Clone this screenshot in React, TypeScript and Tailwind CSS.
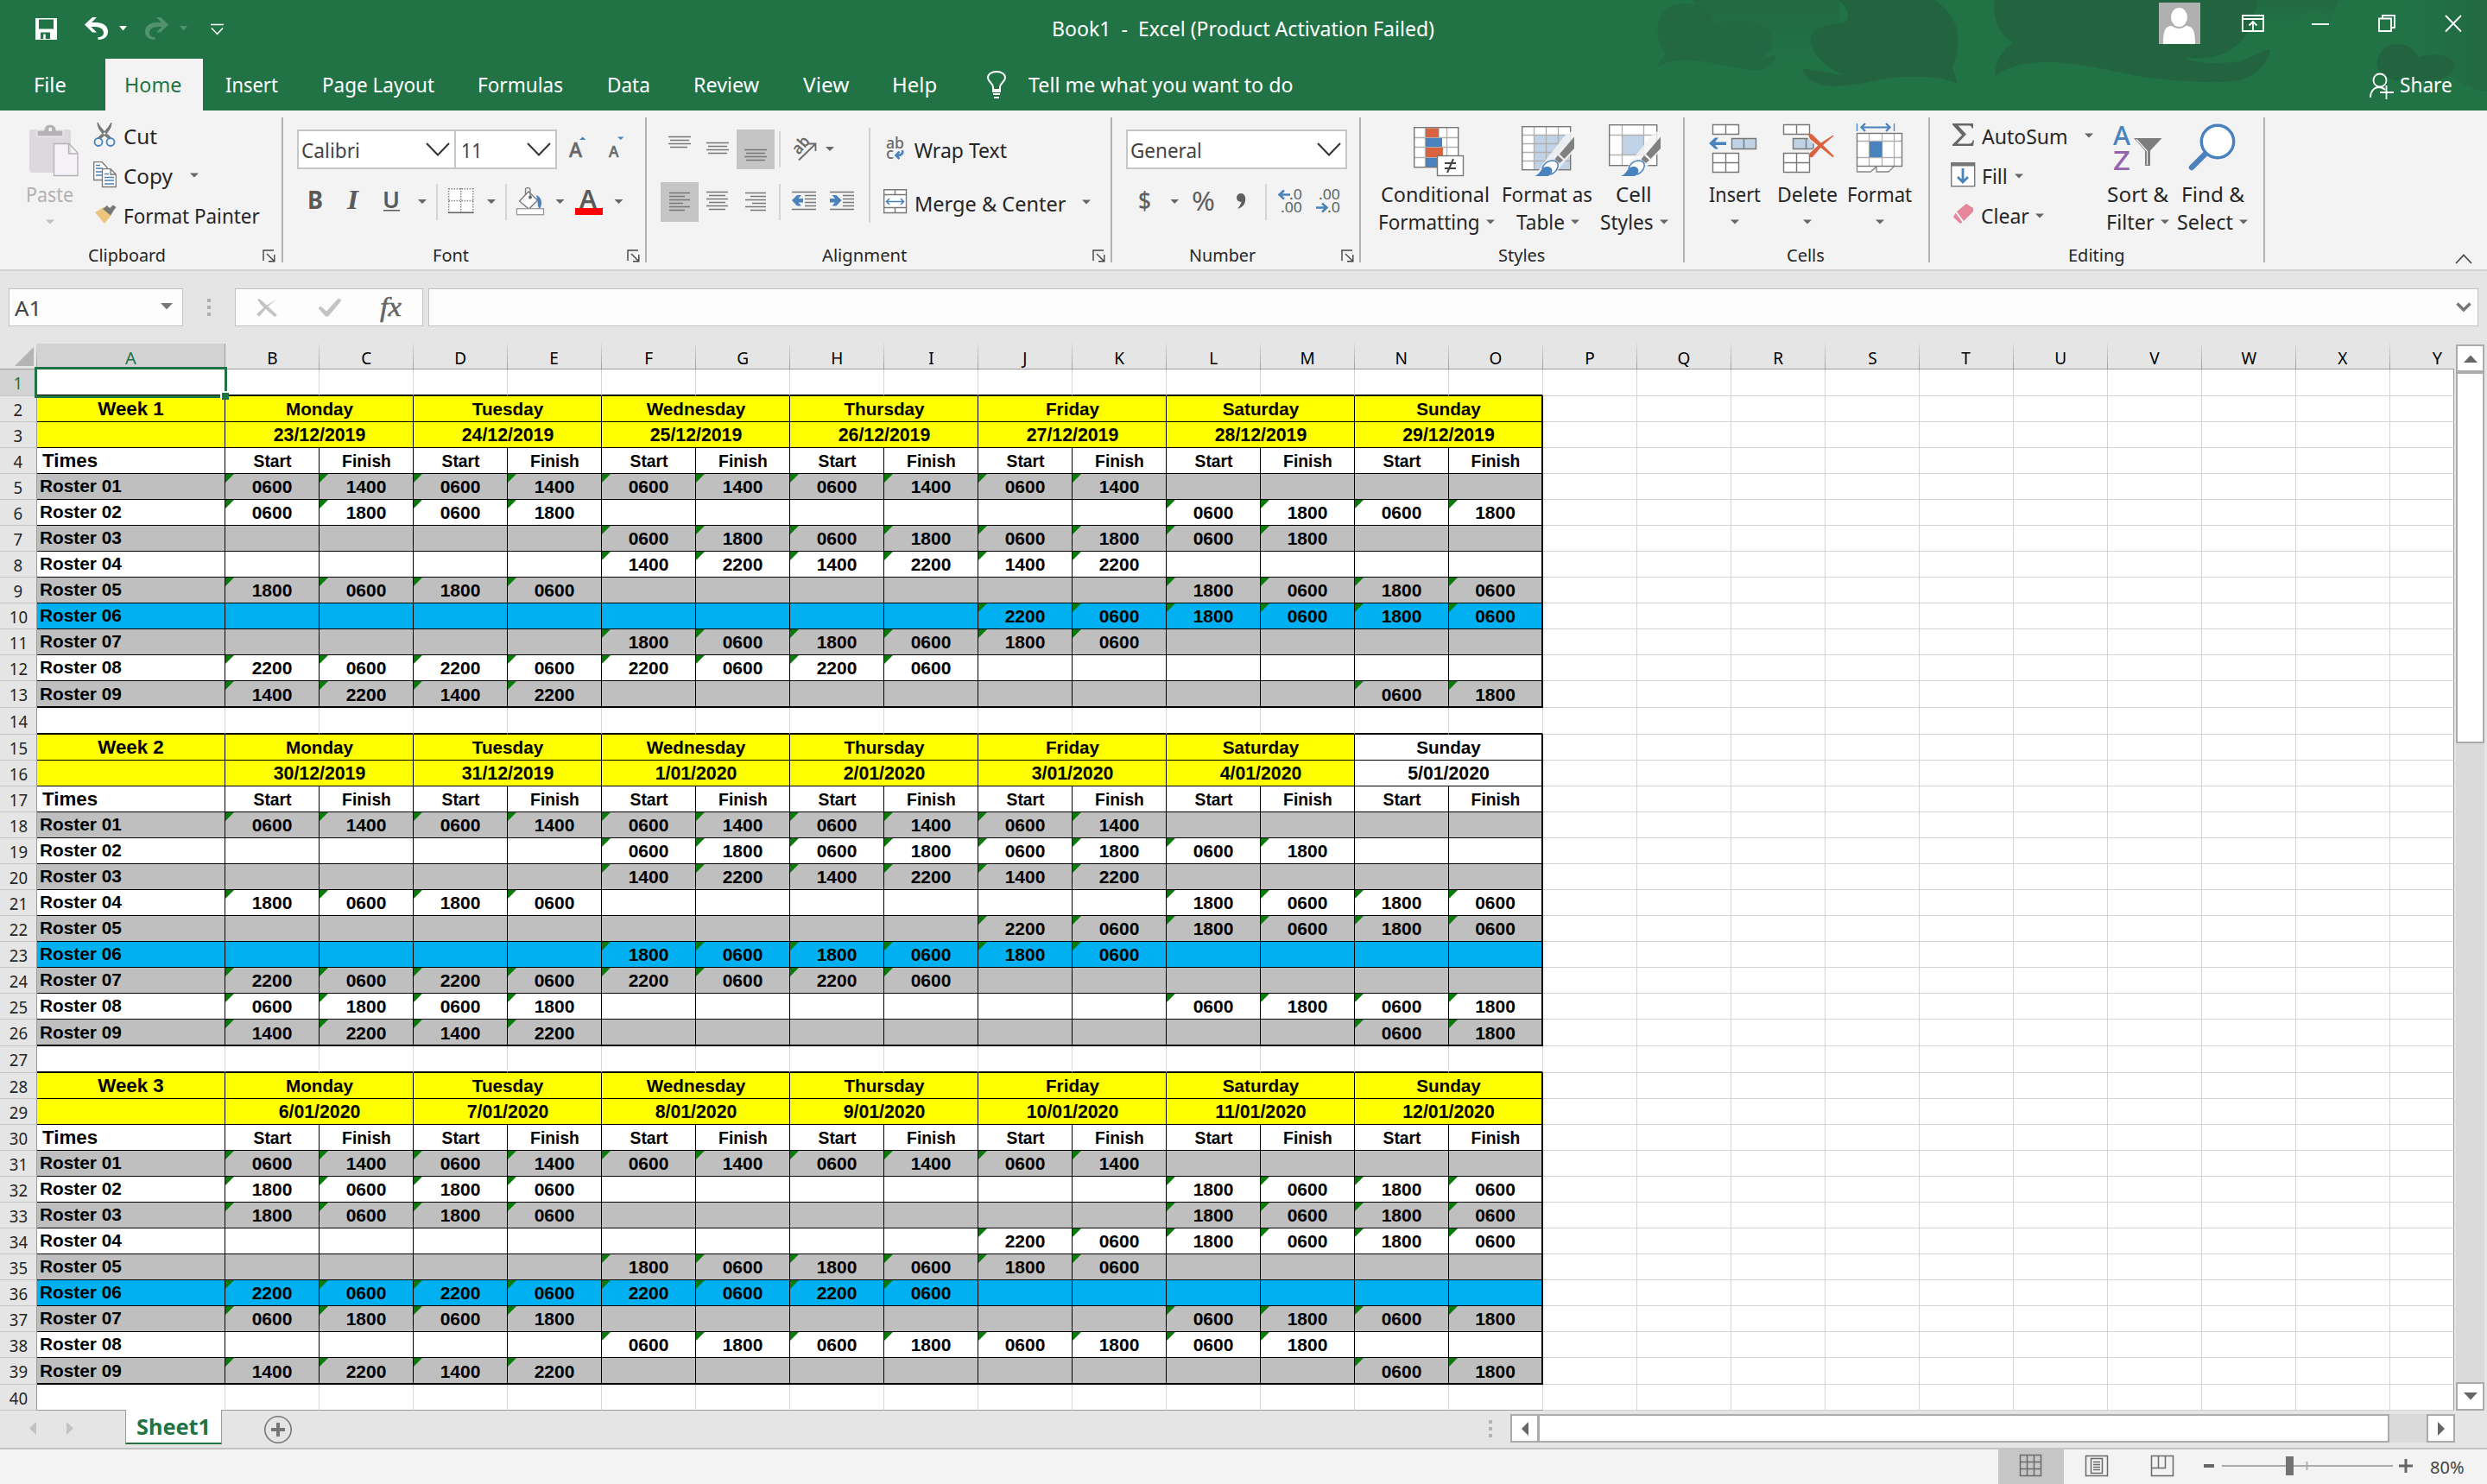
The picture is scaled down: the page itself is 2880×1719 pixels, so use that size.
import React, { useLayoutEffect, useRef } from "react";
import type { ReactNode } from "react";

/* ---------- primitives ---------- */

// One line of text condensed or widened to the width of its box.
function T({ c = "", children }: { c?: string; children: ReactNode }) {
  const box = useRef<HTMLSpanElement>(null);
  const ink = useRef<HTMLSpanElement>(null);
  useLayoutEffect(() => {
    if (box.current && ink.current) {
      ink.current.style.transform = `scaleX(${box.current.clientWidth / ink.current.offsetWidth})`;
    }
  }, []);
  return (
    <span ref={box} className={`block shrink-0 ${c}`}>
      <span ref={ink} className="inline-block origin-left whitespace-pre">
        {children}
      </span>
    </span>
  );
}

type IcProps = { x: number; y: number; w: number; h: number; c?: string; children: ReactNode };
function Ic({ x, y, w, h, c = "", children }: IcProps) {
  return (
    <svg width={w} height={h} viewBox={`${x} ${y} ${w} ${h}`} fill="none" className={`block shrink-0 ${c}`}>
      {children}
    </svg>
  );
}

function Arrow({ c = "text-[#666]" }: { c?: string }) {
  return (
    <svg width="10" height="6" viewBox="0 0 10 6" className={`block shrink-0 ${c}`}>
      <path d="M0 0.5H10L5 5.5Z" fill="currentColor" />
    </svg>
  );
}

const Sep = () => <div className="mt-2 h-[168px] w-[2px] shrink-0 bg-[#b1b1b1]" />;

const Launcher = ({ c }: { c: string }) => (
  <svg width="15" height="15" viewBox="0 0 15 15" fill="none" stroke="#444" strokeWidth="1.4" className={`shrink-0 ${c}`}>
    <path d="M13 1H1V13M5 5L13 13M13.8 6V13.8H7" />
  </svg>
);

function Group({ w, label, launcher, children }: { w: string; label: ReactNode; launcher?: ReactNode; children: ReactNode }) {
  return (
    <section className={`flex shrink-0 flex-col pt-[7px] ${w}`}>
      <div className="flex h-[138px]">{children}</div>
      <div className="mt-[8px] flex h-[30px] items-center text-[20px] leading-[30px]">
        {label}
        {launcher}
      </div>
    </section>
  );
}

function Combo({ w, text, tw }: { w: string; text: string; tw: string }) {
  return (
    <div className={`flex h-[46px] shrink-0 items-center border-2 border-[#c6c6c6] bg-white pl-[3px] pr-[5px] text-[#444] ${w}`}>
      <T c={`pt-[2px] ${tw}`}>{text}</T>
      <svg width="28" height="16" viewBox="0 0 28 16" className="ml-auto" fill="none" stroke="#333" strokeWidth="2">
        <path d="M1 1L14 14.5L27 1" />
      </svg>
    </div>
  );
}

function BigButton({ c, icon, top, bottom }: { c: string; icon: ReactNode; top: ReactNode; bottom?: ReactNode }) {
  return (
    <div className={`flex shrink-0 flex-col items-center ${c}`}>
      {icon}
      <div className="flex h-8 items-center">{top}</div>
      <div className="flex h-8 items-center gap-[7px]">
        {bottom}
        <Arrow />
      </div>
    </div>
  );
}

const Lines = ({ rows }: { rows: number[][] }) => (
  <path d={rows.map(([a, b, y]) => `M${a} ${y}H${b}`).join("")} stroke="#777" strokeWidth="1.5" />
);

/* ---------- title bar and tabs ---------- */

function Backdrop() {
  return (
    <svg className="absolute right-0 top-0" width="1000" height="128" viewBox="1880 0 1000 128">
      <defs>
        <linearGradient id="haze" x1="0" x2="0" y1="0" y2="1">
          <stop offset="0" stopColor="#236640" stopOpacity="0.75" />
          <stop offset="1" stopColor="#236640" stopOpacity="0" />
        </linearGradient>
        <linearGradient id="side" x1="0" x2="1" y1="0" y2="0">
          <stop offset="0" stopColor="#236640" stopOpacity="0" />
          <stop offset="1" stopColor="#236640" stopOpacity="0.75" />
        </linearGradient>
      </defs>
      <path d="M1960 0H2130V60C2060 90 1990 60 1960 0Z" fill="url(#haze)" />
      <path d="M2600 0H2708C2702 16 2700 26 2692 26C2690 10 2672 10 2668 24C2650 34 2620 30 2600 0Z" fill="url(#haze)" />
      <path d="M2785 0H2880V106C2850 104 2810 70 2797 50Z" fill="url(#side)" />
      <path d="M1918 79L1928 62C1912 38 1918 4 1951 4C1974 5 1984 18 1986 28C2010 20 2050 24 2052 42C2054 56 2046 64 2038 68L2057 64C2054 76 2044 82 2030 81C1998 79 1946 58 1918 79Z" fill="#236641" fillOpacity="0.8" />
      <path d="M2128 0H2240C2272 20 2272 52 2261 78L2267 97C2242 86 2222 89 2199 89C2174 91 2152 100 2122 100C2100 99 2090 90 2087 79L2134 87C2108 74 2096 58 2097 44C2099 30 2118 30 2136 26C2144 20 2140 8 2128 0Z" fill="#236440" />
      <path d="M2310 0C2306 22 2316 40 2331 50C2318 58 2310 72 2310 88C2326 76 2348 71 2377 72C2430 74 2462 90 2518 93C2562 96 2596 98 2612 84C2622 76 2628 68 2629 58C2626 55 2618 62 2594 71C2570 74 2544 74 2530 67C2580 72 2600 48 2608 26C2612 14 2613 6 2613 0Z" fill="#236440" />
      <path d="M2776 51C2792 51 2798 60 2800 66C2820 60 2842 64 2842 76C2842 90 2820 96 2790 95C2764 94 2750 84 2753 70C2756 58 2764 51 2776 51Z" fill="#236440" />
    </svg>
  );
}

function TitleBar() {
  return (
    <div className="relative flex h-[68px] shrink-0 items-start text-white">
      <Ic x={40} y={0} w={220} h={68} c="ml-[40px]">
        <path d="M41 21H66V46H41Z" fill="#fff" />
        <path d="M45 22.5H62V33.5H45ZM47 37.5H58V45H52.5V40H50.5V45H47Z" fill="#217346" />
        <path d="M50.5 39.5H52.5V45H50.5Z" fill="#fff" />
        <path d="M112 20H107L98 28.5L107 37.5H112L105.5 31H110C116 31 120 34 120 38C120 41 118 43 113.5 43V46C121 46 125 42 125 36.5C125 30 119 26 111 26H106Z" fill="#fff" />
        <path d="M138 30H147L142.5 35.5Z" fill="#fff" />
        <g opacity="0.22">
          <path d="M181 20H186L195 28.5L186 37.5H181L187.5 31H183C177 31 173 34 173 38C173 41 175 43 179.500 43V46C172 46 168 42 168 36.500C168 30 174 26 182 26H187Z" fill="#fff" />
          <path d="M208 30H217L212.500 35.500Z" fill="#fff" />
        </g>
        <path d="M244 28.500H259M245 32.500L251.500 39.500L258 32.500" stroke="#fff" strokeWidth="1.500" />
      </Ic>
      <T c="ml-[958px] w-[443px] text-[23px] leading-[66px]">{"Book1  -  Excel (Product Activation Failed)"}</T>
      <Ic x={2500} y={0} w={380} h={68} c="ml-auto">
        <rect x="2500" y="3" width="48" height="48" fill="#b0b0b0" />
        <ellipse cx="2523.500" cy="20" rx="9.500" ry="11" fill="#fff" />
        <path d="M2505 51C2505 36 2507 30 2515 30C2520 34 2527 34 2531 30C2540 30 2542 36 2542 51Z" fill="#fff" />
        <g stroke="#fff" strokeWidth="1.800">
          <path d="M2597 18H2621V36H2597ZM2597 22H2621M2609 35V26M2604.500 29.500L2609 25L2613.500 29.500" />
          <path d="M2677 28H2697" />
          <path d="M2755 21.500H2769V36H2755ZM2759 21V18H2773V32H2769" />
          <path d="M2832 18L2850 36.500M2850 18L2832 36.500" />
        </g>
      </Ic>
    </div>
  );
}

function Tabs() {
  return (
    <nav className="relative flex h-[60px] shrink-0 text-[23px] leading-[60px] text-white">
      <T c="ml-[39px] w-[38px]">File</T>
      <div className="ml-[45px] flex h-[60px] w-[113px] shrink-0 bg-[#f3f3f3] pl-[22px] text-[#217346]">
        <T c="w-[66px]">Home</T>
      </div>
      <T c="ml-[26px] w-[61px]">Insert</T>
      <T c="ml-[51px] w-[130px]">Page Layout</T>
      <T c="ml-[50px] w-[99px]">Formulas</T>
      <T c="ml-[51px] w-[50px]">Data</T>
      <T c="ml-[50px] w-[76px]">Review</T>
      <T c="ml-[51px] w-[53px]">View</T>
      <T c="ml-[50px] w-[52px]">Help</T>
      <Ic x={1142} y={68} w={24} h={60} c="ml-[58px]">
        <path d="M1149 106V101C1149 96 1143 95 1143 90C1143 86 1147 83 1153 83C1159 83 1163 86 1163 90C1163 95 1157 96 1157 101V106ZM1149 104H1157M1150 113H1156M1149 109H1157" stroke="#fff" strokeWidth="2" />
      </Ic>
      <T c="ml-[24px] w-[307px]">Tell me what you want to do</T>
      <Ic x={2743} y={68} w={31} h={60} c="ml-auto">
        <circle cx="2756" cy="93" r="7.500" stroke="#fff" strokeWidth="1.800" />
        <path d="M2745 113C2745 106 2749 101 2755 101C2758 101 2760 102 2762 104M2763.500 99V115M2756 107H2772" stroke="#fff" strokeWidth="1.800" />
      </Ic>
      <T c="ml-[5px] mr-[40px] w-[61px]">Share</T>
    </nav>
  );
}

/* ---------- ribbon ---------- */

function Clipboard() {
  return (
    <Group w="w-[326px]" label={<T c="ml-[102px] w-[90px]">Clipboard</T>} launcher={<Launcher c="ml-[112px]" />}>
      <div className="ml-[24px] flex w-[68px] shrink-0 flex-col items-center text-[#b3b0b3]">
        <Ic x={24} y={135} w={68} h={74}>
          <rect x="34" y="150" width="48" height="50" rx="3" fill="#dcd8dc" />
          <path d="M43 158V151H51C51 142 65 142 65 151H73V158Z" fill="#b5b2b5" stroke="#f3f3f3" />
          <rect x="56.500" y="148" width="3.500" height="4" fill="#f3f3f3" />
          <path d="M62.500 166.500H80L90 177V203.500H62.500ZM79.500 167V178H90" fill="#f5f1f7" stroke="#b5b2b5" strokeWidth="1.300" />
        </Ic>
        <div className="flex h-8 items-center"><T c="mr-[2px] w-[55px]">Paste</T></div>
        <div className="flex h-8 items-center"><Arrow c="text-[#c0bec0]" /></div>
      </div>
      <div className="ml-[16px] flex flex-col">
        <div className="flex h-[46px] items-center">
          <Ic x={108} y={135} w={27} h={46}>
            <path d="M113 142C113 150 119 155 126 161L128 159C122 154 117 149 113 142ZM129 142C129 150 123 155 116 161L114 159C120 154 125 149 129 142Z" fill="#777" stroke="#777" />
            <circle cx="114" cy="164.500" r="4.500" stroke="#4a82bd" strokeWidth="1.800" />
            <circle cx="128" cy="164.500" r="4.500" stroke="#4a82bd" strokeWidth="1.800" />
          </Ic>
          <T c="ml-[8px] w-[39px]">Cut</T>
        </div>
        <div className="flex h-[46px] items-center">
          <Ic x={108} y={181} w={27} h={46}>
            <path d="M108.700 187.700H118L124 194V208.500H108.700Z" fill="#fff" stroke="#777" strokeWidth="1.300" />
            <path d="M111 191.500H116M111 195H119M111 199H118M111 203H118" stroke="#4a82bd" strokeWidth="1.300" />
            <path d="M118.500 195.700H128L134.300 202V216.500H118.500ZM128 196V202H134" fill="#fff" stroke="#777" strokeWidth="1.300" />
            <path d="M121 201.500H126M121 205.500H132M121 209H132M121 213H132" stroke="#4a82bd" strokeWidth="1.300" />
          </Ic>
          <T c="ml-[8px] w-[57px] -mt-px">Copy</T>
          <span className="ml-[20px] -mt-[3px]"><Arrow /></span>
        </div>
        <div className="flex h-[46px] items-center">
          <Ic x={108} y={227} w={27} h={46}>
            <path d="M110 246L120 240L129 249L121 259Z" fill="#ecc57c" />
            <path d="M119 242L124 238L131 245L128 249.500ZM126 242L131 237.500L134.500 240L130 246Z" fill="#777" />
          </Ic>
          <T c="ml-[8px] w-[158px]">Format Painter</T>
        </div>
      </div>
    </Group>
  );
}

function FontGroup() {
  return (
    <Group w="w-[419px]" label={<T c="ml-[173px] w-[42px]">Font</T>} launcher={<Launcher c="ml-[183px]" />}>
      <div className="ml-[16px] flex flex-col">
        <div className="flex h-[75px] items-center">
          <Combo w="w-[184px]" text="Calibri" tw="w-[68px]" />
          <div className="-ml-[2px]"><Combo w="w-[119px]" text="11" tw="ml-[3px] w-[24px]" /></div>
          <Ic x={645} y={135} w={85} h={75}>
            <g fill="#666" fontFamily="Noto Sans" fontWeight="500">
              <text x="659" y="182" fontSize="23" stroke="#666" strokeWidth="0.500">A</text>
              <text x="705" y="182" fontSize="17.500" stroke="#666" strokeWidth="0.500">A</text>
            </g>
            <path d="M671 162H678.500L674.800 158.500ZM715 158.500H722.500L718.800 162Z" fill="#4a82bd" />
          </Ic>
        </div>
        <Ic x={344} y={210} w={390} h={48}>
          <g fill="#5a5a5a">
            <text x="356" y="241.500" fontFamily="Noto Sans" fontWeight="700" fontSize="28.500" textLength="18" lengthAdjust="spacingAndGlyphs">B</text>
            <text x="402" y="241.500" fontFamily="Liberation Serif" fontStyle="italic" fontWeight="700" fontSize="31" textLength="13" lengthAdjust="spacingAndGlyphs">I</text>
            <text x="443" y="240.500" fontFamily="Noto Sans" fontWeight="600" fontSize="27" textLength="20" lengthAdjust="spacingAndGlyphs">U</text>
            <rect x="444" y="243" width="19" height="1.500" />
            <text x="671" y="240.500" fontFamily="Noto Sans" fontWeight="600" fontSize="28.500" textLength="20" lengthAdjust="spacingAndGlyphs">A</text>
          </g>
          <path d="M484 231H494L489 236ZM564 231H574L569 236ZM643.500 231H653.500L648.500 236ZM711.500 231H721.500L716.500 236Z" fill="#666" />
          <path d="M506 213V255M586 213V255" stroke="#d0d0d0" strokeWidth="1.700" />
          <path d="M519.500 218.700H548V246H519.500Z" fill="#fff" />
          <path d="M519.500 218.700H548M519.500 232.500H548M519.700 218V246M533.700 218V246M547.700 218V246" stroke="#888" strokeWidth="1.500" strokeDasharray="1.500 1.500" />
          <path d="M519 246.300H548.500" stroke="#666" strokeWidth="1.600" />
          <path d="M621 226C627 228 629 236 625 242C622 240 623 232 621 226Z" fill="#4a82bd" />
          <path d="M601.500 233L612 222L622.500 232L612.500 242Z" fill="#fff" stroke="#777" strokeWidth="1.300" />
          <path d="M608.500 226V219.500C608.500 217 614 217 614 219.500V229" stroke="#777" strokeWidth="1.300" />
          <circle cx="614" cy="228.500" r="2" fill="#666" />
          <rect x="598.500" y="241.700" width="31" height="7" fill="#fff" stroke="#999" strokeWidth="1.300" />
          <rect x="666" y="241" width="32" height="8" fill="#f00" />
        </Ic>
      </div>
    </Group>
  );
}

function Alignment() {
  return (
    <Group w="w-[537px]" label={<T c="ml-[203px] w-[98px]">Alignment</T>} launcher={<Launcher c="ml-[215px]" />}>
      <div className="ml-[14px] flex w-[243px] shrink-0 flex-col">
        <Ic x={763} y={135} w={230} h={75}>
          <rect x="853" y="150" width="44" height="46" fill="#c5c5c5" />
          <Lines rows={[[774, 800, 158.500], [776, 798, 162.500], [774, 800, 166.500], [776, 796, 170.500]]} />
          <Lines rows={[[818, 844, 165.500], [820, 842, 169.500], [818, 844, 173.500], [820, 842, 177.500]]} />
          <Lines rows={[[862, 888, 173.500], [864, 886, 177.500], [862, 888, 181.500], [864, 886, 185.500]]} />
          <path d="M903 152V194" stroke="#d0d0d0" strokeWidth="1.700" />
          <text transform="translate(925 180) rotate(-49)" fontFamily="Noto Sans" fontWeight="600" fontSize="18.500" fill="#6a6a6a" textLength="21" lengthAdjust="spacingAndGlyphs">ab</text>
          <path d="M925 185.500L944 167M936 166.500H944.500V175" stroke="#6a6a6a" strokeWidth="1.800" />
          <path d="M956 170H966L961 175Z" fill="#666" />
        </Ic>
        <Ic x={763} y={210} w={230} h={48}>
          <rect x="765" y="211" width="44" height="46" fill="#c5c5c5" />
          <Lines rows={[[775, 799, 223.500], [775, 793, 227.500], [775, 799, 231.500], [775, 791, 235.500], [775, 799, 239.500], [775, 793, 243.500]]} />
          <Lines rows={[[818, 843, 222.500], [821, 840, 226.500], [818, 843, 230.500], [821, 840, 234.500], [818, 843, 238.500], [821, 840, 242.500]]} />
          <Lines rows={[[863, 887, 223.500], [869, 887, 227.500], [863, 887, 231.500], [871, 887, 235.500], [863, 887, 239.500], [869, 887, 243.500]]} />
          <path d="M903 213V255" stroke="#d0d0d0" strokeWidth="1.700" />
          <Lines rows={[[917, 945, 222.500], [932, 945, 226.500], [932, 945, 230.500], [932, 945, 234.500], [932, 945, 238.500], [917, 945, 242.500]]} />
          <Lines rows={[[961, 989, 222.500], [976, 989, 226.500], [976, 989, 230.500], [976, 989, 234.500], [976, 989, 238.500], [961, 989, 242.500]]} />
          <path d="M917 232L923 226H928L924.500 230H930V234.500H924.500L928 238.500H923ZM974.500 232L968.500 226H963.500L967 230H961V234.500H967L963.500 238.500H968.500Z" fill="#4a82bd" />
        </Ic>
      </div>
      <div className="mt-[13px] h-[110px] w-[1.700px] shrink-0 bg-[#d0d0d0]" />
      <div className="ml-[15px] flex flex-col">
        <div className="flex h-[75px] items-center">
          <Ic x={1023} y={135} w={28} h={75}>
            <g fontFamily="Noto Sans" fontSize="18" fontWeight="500" fill="#6a6a6a">
              <text x="1026" y="171.500" textLength="21" lengthAdjust="spacingAndGlyphs">ab</text>
              <text x="1026" y="184" textLength="9" lengthAdjust="spacingAndGlyphs">c</text>
            </g>
            <path d="M1045 174C1046 178 1044 180 1039 180M1041.500 175.500L1037.500 180L1041.500 184" stroke="#4a82bd" strokeWidth="2.600" />
          </Ic>
          <T c="ml-[8px] w-[107px] pt-[2px]">Wrap Text</T>
        </div>
        <div className="flex h-[48px] items-center">
          <Ic x={1023} y={210} w={28} h={48}>
            <path d="M1023.700 219.700H1049.500V246.500H1023.700ZM1023.700 225.500H1049.500M1023.700 240.500H1049.500M1036.500 219.700V225.500M1036.500 240.500V246.500" fill="#fff" stroke="#777" strokeWidth="1.400" />
            <path d="M1027 233.500H1046M1030 230L1026.500 233.500L1030 237M1043 230L1046.500 233.500L1043 237" stroke="#4a82bd" strokeWidth="1.600" />
          </Ic>
          <T c="ml-[8px] w-[176px] pt-[3px]">{"Merge & Center"}</T>
          <span className="ml-[18px]"><Arrow /></span>
        </div>
      </div>
    </Group>
  );
}

function NumberGroup() {
  return (
    <Group w="w-[286px]" label={<T c="ml-[89px] w-[77px]">Number</T>} launcher={<Launcher c="ml-[99px]" />}>
      <div className="ml-[16px] flex flex-col">
        <div className="flex h-[75px] items-center">
          <Combo w="w-[256px]" text="General" tw="w-[83px]" />
        </div>
        <Ic x={1304} y={210} w={256} h={48}>
          <g fill="#5f5f5f" fontFamily="Noto Sans">
            <text x="1318" y="242.500" fontSize="28" fontWeight="500" textLength="15" lengthAdjust="spacingAndGlyphs">$</text>
            <text x="1380" y="244" fontSize="30" textLength="27" lengthAdjust="spacingAndGlyphs">%</text>
            <g fontSize="17">
              <text x="1493" y="231" textLength="15" lengthAdjust="spacingAndGlyphs">.0</text>
              <text x="1483" y="246" textLength="25" lengthAdjust="spacingAndGlyphs">.00</text>
              <text x="1527" y="231" textLength="25" lengthAdjust="spacingAndGlyphs">.00</text>
              <text x="1537" y="246" textLength="15" lengthAdjust="spacingAndGlyphs">.0</text>
            </g>
          </g>
          <circle cx="1437" cy="229" r="5" fill="#5f5f5f" />
          <path d="M1442 228C1443 235 1440 240 1433 242C1436 238 1438 235 1438 231Z" fill="#5f5f5f" />
          <path d="M1355.500 231H1365L1360.200 236Z" fill="#666" />
          <path d="M1466 213V255" stroke="#d0d0d0" strokeWidth="1.700" />
          <path d="M1494 225.500H1482M1487 220.500L1481.500 225.500L1487 230.500M1524 240.500H1536M1531 235.500L1536.500 240.500L1531 245.500" stroke="#4a82bd" strokeWidth="2.600" />
        </Ic>
      </div>
    </Group>
  );
}

const Brush = ({ x }: { x: number }) => (
  <g transform={`translate(${x} 0)`}>
    <path d="M-1 206L14 184L36 156L46 150V174L20 206Z" fill="#f3f3f3" fillOpacity="0.85" />
    <path d="M46 158.500V172L34.500 184L29 178.500Z" fill="#808080" />
    <path d="M27 180L33 185.500L29 189L23.500 184.500Z" fill="#808080" />
    <path d="M9 195C12 186 22 184 26 188C29 192 26 199 19 202Z" fill="#fff" stroke="#4a82bd" strokeWidth="1.500" />
    <path d="M0 204C7 202 8 192 15 193C21 193 23 200 16 204Z" fill="#4a82bd" />
  </g>
);

function Styles() {
  return (
    <Group w="w-[373px]" label={<T c="ml-[159px] w-[54px]">Styles</T>}>
      <BigButton
        c="ml-[18px] w-[138px]"
        top={<T c="mr-[2px] w-[126px]">Conditional</T>}
        bottom={<T c="w-[118px]">Formatting</T>}
        icon={
          <Ic x={1594} y={135} w={138} h={74}>
            <rect x="1637.700" y="147.700" width="51" height="46" fill="#fff" />
            <path d="M1638 159.500H1689M1638 170.500H1689M1638 182.500H1689M1650.500 148V193M1666 148V193M1675.500 148V193" stroke="#b0b0b0" strokeWidth="1.300" />
            <path d="M1651 148.500H1666V159H1651ZM1651 171H1671V182H1651Z" fill="#d9623f" />
            <path d="M1651 160H1670V170H1651ZM1651 183H1666V193H1651Z" fill="#4a82bd" />
            <rect x="1637.700" y="147.700" width="51" height="46" stroke="#777" strokeWidth="1.400" />
            <rect x="1664.500" y="180.500" width="30" height="23" fill="#fff" stroke="#777" strokeWidth="1.400" />
            <path d="M1673 189H1686M1673 195H1686M1683 184L1676 200" stroke="#444" strokeWidth="2" />
          </Ic>
        }
      />
      <BigButton
        c="ml-[6px] w-[108px]"
        top={<T c="mr-[2px] w-[105px]">Format as</T>}
        bottom={<T c="w-[56px]">Table</T>}
        icon={
          <Ic x={1738} y={135} w={108} h={74}>
            <rect x="1762.700" y="146.700" width="56" height="50" fill="#fff" />
            <rect x="1776.500" y="156.500" width="42" height="40" fill="#c0d2e5" />
            <path d="M1763 156.500H1819M1763 166.500H1819M1763 176.500H1819M1763 186.500H1819M1776.500 147V197M1790.500 147V197M1804.500 147V197" stroke="#b0b0b0" strokeWidth="1.300" />
            <rect x="1762.700" y="146.700" width="56" height="50" stroke="#777" strokeWidth="1.400" />
            <Brush x={1777} />
          </Ic>
        }
      />
      <BigButton
        c="ml-[4px] w-[84px]"
        top={<T c="mr-[2px] w-[41px]">Cell</T>}
        bottom={<T c="w-[62px]">Styles</T>}
        icon={
          <Ic x={1850} y={135} w={84} h={74}>
            <rect x="1863.700" y="144.700" width="55" height="47" fill="#fff" />
            <rect x="1878.500" y="156.500" width="25" height="23" fill="#c0d2e5" />
            <path d="M1864 156.500H1919M1864 179.500H1919M1878.500 145V191M1903.500 145V191" stroke="#b0b0b0" strokeWidth="1.300" />
            <rect x="1863.700" y="144.700" width="55" height="47" stroke="#777" strokeWidth="1.400" />
            <Brush x={1877} />
          </Ic>
        }
      />
    </Group>
  );
}

function Cells() {
  return (
    <Group w="w-[282px]" label={<T c="ml-[118px] w-[44px]">Cells</T>}>
      <BigButton
        c="ml-[25px] w-[66px]"
        top={<T c="w-[60px]">Insert</T>}
        icon={
          <Ic x={1976} y={135} w={66} h={74}>
            <g stroke="#777" strokeWidth="1.400">
              <path d="M1983.500 144.500H2013.500V155.500H1983.500ZM1998.500 144.500V155.500M1983.500 177.500H2013.500V199.500H1983.500ZM1998.500 177.500V199.500M1983.500 188.500H2013.500" fill="#fff" />
              <path d="M2005.500 160.500H2033.500V172.500H2005.500ZM2019.500 160.500V172.500" fill="#c0d2e5" />
            </g>
            <path d="M1979 166L1986 159.500H1990L1986 164.500H1999V168H1986L1990 172.500H1986Z" fill="#4a82bd" />
          </Ic>
        }
      />
      <BigButton
        c="ml-[14px] w-[74px]"
        top={<T c="w-[70px]">Delete</T>}
        icon={
          <Ic x={2056} y={135} w={74} h={74}>
            <g stroke="#777" strokeWidth="1.400">
              <path d="M2065.500 144.500H2095.500V155.500H2065.500ZM2080.500 144.500V155.500M2065.500 177.500H2095.500V199.500H2065.500ZM2080.500 177.500V199.500M2065.500 188.500H2095.500" fill="#fff" />
              <path d="M2076.500 160.500H2100V172.500H2076.500ZM2091.500 160.500V172.500" fill="#c0d2e5" />
            </g>
            <path d="M2096 157L2122 181M2122 159L2097 180" stroke="#f3f3f3" strokeWidth="8" />
            <path d="M2094 156C2096 154 2098 155 2100 157L2124 181L2122 182L2096 161ZM2124 157L2110 169L2099 182C2096 183 2094 181 2095 178L2108 166L2122 157Z" fill="#d9623f" />
          </Ic>
        }
      />
      <BigButton
        c="ml-[8px] w-[78px]"
        top={<T c="mr-[1px] w-[75px]">Format</T>}
        icon={
          <Ic x={2138} y={135} w={78} h={74}>
            <path d="M2150.500 143V152M2193.500 143V152" stroke="#4a82bd" strokeWidth="1.300" />
            <path d="M2156 147.500H2188M2160 143L2155.500 147.500L2160 152M2184 143L2188.500 147.500L2184 152" stroke="#4a82bd" strokeWidth="2.200" />
            <path d="M2150.500 193V199H2166L2173 193V199H2187L2194 192" fill="#fff" stroke="#888" strokeWidth="1.300" />
            <rect x="2150.500" y="154.500" width="52" height="38" fill="#fff" />
            <path d="M2151 163.500H2202M2151 182.500H2202M2164.500 155V192M2179.500 155V192M2193.500 155V192" stroke="#b0b0b0" strokeWidth="1.300" />
            <rect x="2165" y="164" width="14.500" height="18" fill="#4a82bd" />
            <rect x="2150.500" y="154.500" width="52" height="38" stroke="#777" strokeWidth="1.400" />
          </Ic>
        }
      />
    </Group>
  );
}

function Editing() {
  return (
    <Group w="w-[386px]" label={<T c="ml-[160px] w-[66px]">Editing</T>}>
      <div className="ml-[24px] flex w-[179px] shrink-0 flex-col">
        <div className="flex h-[46px] items-center">
          <Ic x={2259} y={135} w={29} h={46}>
            <path d="M2261 143H2285V148.500H2283.500C2283 146 2282 145.500 2279 145.500H2267.500L2277 155.500L2266.500 166.500H2280C2283 166.500 2284 165 2284.500 162.500H2286L2285 169H2261V167.500L2272 156.500L2261 144.500Z" fill="#666" />
          </Ic>
          <T c="ml-[7px] w-[99px]">AutoSum</T>
          <span className="ml-[20px] -mt-[3px]"><Arrow /></span>
        </div>
        <div className="flex h-[46px] items-center">
          <Ic x={2259} y={181} w={29} h={46}>
            <rect x="2259.700" y="188.700" width="27" height="27" fill="#fff" stroke="#777" strokeWidth="1.400" />
            <rect x="2259" y="188" width="28" height="4.500" fill="#777" />
            <path d="M2273 195V210M2267 205L2273 211L2279 205" stroke="#4a82bd" strokeWidth="2.800" />
          </Ic>
          <T c="ml-[7px] w-[30px]">Fill</T>
          <span className="ml-[8px]"><Arrow /></span>
        </div>
        <div className="flex h-[46px] items-center">
          <Ic x={2259} y={227} w={29} h={46}>
            <path d="M2266 245L2277 236L2285 241V245L2274 256ZM2264.500 246.500L2272.500 257.500L2270 259L2262 251.500Z" fill="#e5869b" />
          </Ic>
          <T c="ml-[6px] w-[56px]">Clear</T>
          <span className="ml-[7px]"><Arrow /></span>
        </div>
      </div>
      <BigButton
        c="w-[74px]"
        top={<T c="w-[71px]">{"Sort &"}</T>}
        bottom={<T c="w-[56px]">Filter</T>}
        icon={
          <Ic x={2438} y={135} w={74} h={74}>
            <g fontFamily="Noto Sans" fontSize="30" fontWeight="500">
              <text x="2447" y="168" fill="#4a82bd" textLength="20" lengthAdjust="spacingAndGlyphs">A</text>
              <text x="2447" y="197" fill="#9464b0" textLength="20" lengthAdjust="spacingAndGlyphs">Z</text>
            </g>
            <path d="M2471 160H2503.500L2490 174.500V192H2484V174.500Z" fill="#7d7d7d" />
            <path d="M2474 161.500L2486.500 175V191" stroke="#f3f3f3" strokeWidth="1.200" />
          </Ic>
        }
      />
      <BigButton
        c="ml-[7px] w-[86px]"
        top={<T c="w-[73px]">{"Find &"}</T>}
        bottom={<T c="w-[65px]">Select</T>}
        icon={
          <Ic x={2519} y={135} w={86} h={74}>
            <path d="M2553 179L2538 194" stroke="#4a82bd" strokeWidth="6.500" strokeLinecap="round" />
            <circle cx="2568" cy="164" r="18.700" fill="#fff" stroke="#4a82bd" strokeWidth="3.400" />
          </Ic>
        }
      />
    </Group>
  );
}

function Ribbon() {
  return (
    <div className="flex h-[186px] shrink-0 border-b-2 border-[#d2d2d2] bg-[#f3f3f3] text-[23px] leading-[32px] text-[#262626]">
      <div className="flex">
        <Clipboard />
        <Sep />
        <FontGroup />
        <Sep />
        <Alignment />
        <Sep />
        <NumberGroup />
        <Sep />
        <Styles />
        <Sep />
        <Cells />
        <Sep />
        <Editing />
        <Sep />
      </div>
      <svg width="20" height="12" viewBox="0 0 20 12" className="ml-auto mr-[17px] mt-[166px]" fill="none" stroke="#444" strokeWidth="1.700">
        <path d="M1 11L10 1.500L19 11" />
      </svg>
    </div>
  );
}

/* ---------- formula bar ---------- */

function FormulaBar() {
  return (
    <div className="flex h-[84px] shrink-0 pl-[10px] pr-[10px] pt-[20px]">
      <div className="flex h-[44px] w-[202px] items-center justify-between border border-[#c3c3c3] bg-[#fdfdfd] pl-[6px] pr-[11px] text-[24px] text-[#444]">
        <T c="w-[31px] pt-[1px]">A1</T>
        <svg width="14" height="8" viewBox="0 0 14 8" className="-mt-[3px]"><path d="M0 0H14L7 7.500Z" fill="#777" /></svg>
      </div>
      <div className="ml-[28px] mt-[12px] flex w-[4px] flex-col gap-[4px]">
        <i className="block h-[4px] bg-[#b0b0b0]" />
        <i className="block h-[4px] bg-[#b0b0b0]" />
        <i className="block h-[4px] bg-[#b0b0b0]" />
      </div>
      <div className="ml-[28px] flex h-[44px] w-[218px] border border-[#c3c3c3] bg-[#fdfdfd]">
        <Ic x={273} y={335} w={216} h={42}>
          <path d="M298 347C300 345 302 347 304 349L321 365L318 367L303 354ZM320 347L309 356L301 366C299 367 297 365 298 363L308 354Z" fill="#c4c4c4" />
          <path d="M369 357L371 355L378 361L392 346L395 348L380 366H377Z" fill="#c4c4c4" stroke="#c4c4c4" />
          <text x="440" y="366" fontFamily="Liberation Serif" fontStyle="italic" fontSize="31" fill="#666" stroke="#666" strokeWidth="0.500" textLength="25" lengthAdjust="spacingAndGlyphs">fx</text>
        </Ic>
      </div>
      <div className="ml-[6px] flex h-[44px] grow items-center justify-end border border-[#c3c3c3] bg-[#fdfdfd] pr-[7px]">
        <svg width="18" height="12" viewBox="0 0 18 12" fill="none" stroke="#777" strokeWidth="3.500"><path d="M1.500 1.500L9 9L16.500 1.500" /></svg>
      </div>
    </div>
  );
}

/* ---------- sheet ---------- */

const columns = "BCDEFGHIJKLMNOPQRSTUVWX".split("");
const spare = "PQRSTUVWX".split("");

const shifts: Record<string, [string, string]> = {
  A: ["0600", "1400"],
  B: ["0600", "1800"],
  C: ["1400", "2200"],
  D: ["1800", "0600"],
  E: ["2200", "0600"],
  ".": ["", ""],
};

const days = ["Monday", "Tuesday", "Wednesday", "Thursday", "Friday", "Saturday", "Sunday"];

const weeks = [
  {
    title: "Week 1",
    first: 2,
    plainSunday: false,
    dates: ["23/12/2019", "24/12/2019", "25/12/2019", "26/12/2019", "27/12/2019", "28/12/2019", "29/12/2019"],
    rosters: ["AAAAA..", "BB...BB", "..BBBB.", "..CCC..", "DD...DD", "....EDD", "..DDD..", "EEEE...", "CC....B"],
  },
  {
    title: "Week 2",
    first: 15,
    plainSunday: true,
    dates: ["30/12/2019", "31/12/2019", "1/01/2020", "2/01/2020", "3/01/2020", "4/01/2020", "5/01/2020"],
    rosters: ["AAAAA..", "..BBBB.", "..CCC..", "DD...DD", "....EDD", "..DDD..", "EEEE...", "BB...BB", "CC....B"],
  },
  {
    title: "Week 3",
    first: 28,
    plainSunday: false,
    dates: ["6/01/2020", "7/01/2020", "8/01/2020", "9/01/2020", "10/01/2020", "11/01/2020", "12/01/2020"],
    rosters: ["AAAAA..", "DD...DD", "DD...DD", "....EDD", "..DDD..", "EEEE...", "BB...BB", "..BBBB.", "CC....B"],
  },
];

function Row({ n, tall = false, children }: { n: number; tall?: boolean; children: ReactNode }) {
  const first = n === 1;
  return (
    <div className={`flex shrink-0 ${tall ? "h-[31px]" : "h-[30px]"}`}>
      <div
        className={`flex w-[43px] shrink-0 items-center justify-center border-b border-r border-b-[#c6c6c6] border-r-[#9b9b9b] pt-[2px] font-[Noto_Sans,sans-serif] text-[20px] font-normal leading-none ${
          first ? "bg-[#d2d2d2] text-[#217346]" : "text-[#262626]"
        }`}
      >
        <span className="scale-x-[.93]">{n}</span>
      </div>
      {children}
      {spare.map((s) => (
        <div key={s} className="w-[109px] shrink-0 border-b border-r border-[#d4d4d4]" />
      ))}
      <div className="w-[74px] shrink-0 border-b border-r border-b-[#d4d4d4] border-r-[#9b9b9b]" />
    </div>
  );
}

function BlankRow({ n, thick }: { n: number; thick: boolean }) {
  const edge = thick ? "border-b-2 border-b-black" : "border-b border-b-[#9b9b9b]";
  return (
    <Row n={n} tall={thick}>
      <div className={`w-[218px] shrink-0 border-r border-r-[#d4d4d4] ${edge}`} />
      {columns.slice(0, 14).map((s) => (
        <div key={s} className={`w-[109px] shrink-0 border-r border-r-[#d4d4d4] ${edge}`} />
      ))}
    </Row>
  );
}

const cell = "relative flex shrink-0 items-center justify-center border-black leading-none";

function WeekHeading({ n, title, items, plainSunday, size }: { n: number; title: string; items: string[]; plainSunday: boolean; size: string }) {
  return (
    <Row n={n}>
      <div className={`${cell} w-[218px] border-b border-r bg-[#ff0] pt-[2px] text-[22.3px]`}>{title}</div>
      {items.map((d, i) => (
        <div
          key={d}
          className={`${cell} w-[218px] border-b pl-px pt-[2px] ${size} ${i === 6 ? "border-r-2" : "border-r"} ${i === 6 && plainSunday ? "bg-white" : "bg-[#ff0]"}`}
        >
          {d}
        </div>
      ))}
    </Row>
  );
}

function Week({ week }: { week: (typeof weeks)[number] }) {
  return (
    <>
      <WeekHeading n={week.first} title={week.title} items={days} plainSunday={week.plainSunday} size="text-[20.7px]" />
      <WeekHeading n={week.first + 1} title="" items={week.dates} plainSunday={week.plainSunday} size="text-[21.3px]" />
      <Row n={week.first + 2}>
        <div className="flex w-[218px] shrink-0 items-center border-b border-r border-black pl-[6px] pt-[2px] text-[22.3px] leading-none">Times</div>
        {columns.slice(0, 14).map((c, i) => (
          <div key={c} className={`${cell} w-[109px] border-b pl-px pt-[2px] text-[19.3px] ${i === 13 ? "border-r-2" : "border-r"}`}>
            {i % 2 ? "Finish" : "Start"}
          </div>
        ))}
      </Row>
      {week.rosters.map((code, r) => {
        const last = r === 8;
        const fill = r === 5 ? "bg-[#00b0f0]" : r % 2 === 0 ? "bg-[#bfbfbf]" : "bg-white";
        const edge = last ? "border-b-2 pt-[2px]" : "border-b";
        return (
          <Row key={r} n={week.first + 3 + r} tall={last}>
            <div className={`flex w-[218px] shrink-0 items-center border-r border-black pl-[3px] text-[20.8px] leading-none ${edge} ${fill}`}>
              {`Roster 0${r + 1}`}
            </div>
            {code
              .split("")
              .flatMap((k) => shifts[k])
              .map((v, i) => (
                <div key={i} className={`${cell} w-[109px] text-[21px] ${edge} ${fill} ${i === 13 ? "border-r-2" : "border-r"}`}>
                  {v && <i className="absolute left-0 top-0 h-[10px] w-[10px] bg-[#087b08] [clip-path:polygon(0_0,100%_0,0_100%)]" />}
                  {v}
                </div>
              ))}
          </Row>
        );
      })}
    </>
  );
}

const headLine = "border-r border-[#b5b5b5] [border-image:linear-gradient(#dcdcdc,#9b9b9b)_1]";

function Sheet() {
  return (
    <div className="flex h-[1236px] shrink-0">
      <div className="relative flex w-[2842px] shrink-0 flex-col font-['Liberation_Sans',sans-serif] font-bold text-black">
        <div className="flex h-[30px] shrink-0 border-b border-[#9b9b9b] font-[Noto_Sans,sans-serif] text-[20px] font-normal leading-[33px]">
          <div className={`w-[43px] shrink-0 pl-[17px] pt-[4px] ${headLine}`}>
            <div className="h-[22px] w-[22px] bg-[#b4b4b4] [clip-path:polygon(100%_0,100%_100%,0_100%)]" />
          </div>
          <div className="flex w-[218px] shrink-0 justify-center border-r border-[#9b9b9b] bg-[#d2d2d2] text-[#217346]">A</div>
          {columns.map((c) => (
            <div key={c} className={`flex w-[109px] shrink-0 justify-center ${headLine}`}>
              <span className="scale-x-[.95]">{c}</span>
            </div>
          ))}
          <div className="flex w-[74px] shrink-0 justify-end pr-[14px]">Y</div>
        </div>
        <div className="flex flex-col bg-[linear-gradient(90deg,#e5e5e5_43px,#fff_43px)]">
          <BlankRow n={1} thick />
          <Week week={weeks[0]} />
          <BlankRow n={14} thick />
          <Week week={weeks[1]} />
          <BlankRow n={27} thick />
          <Week week={weeks[2]} />
          <BlankRow n={40} thick={false} />
        </div>
        <div className="absolute left-[40px] top-[27px] h-[36px] w-[223px] border-[3px] border-[#217346]">
          <i className="absolute -bottom-[5px] -right-[5px] h-[10px] w-[10px] border-l-2 border-t-2 border-white bg-[#217346]" />
        </div>
      </div>
      <div className="ml-[2px] mt-px flex w-[33px] flex-col bg-[#dadada]">
        <div className="flex h-[32px] items-center justify-center border-2 border-[#ababab] bg-white">
          <svg width="16" height="9" viewBox="0 0 16 9"><path d="M0 9H16L8 0.500Z" fill="#666" /></svg>
        </div>
        <div className="h-[430px] border-2 border-[#ababab] bg-white" />
        <div className="mt-auto flex h-[33px] items-center justify-center border-2 border-[#ababab] bg-white">
          <svg width="16" height="9" viewBox="0 0 16 9"><path d="M0 0H16L8 8.500Z" fill="#666" /></svg>
        </div>
      </div>
    </div>
  );
}

/* ---------- bottom bars ---------- */

function SheetTabs() {
  return (
    <div className="flex h-[45px] shrink-0 border-b-2 border-[#c3c3c3]">
      <Ic x={0} y={1634} w={145} h={43}>
        <path d="M42 1647V1662L34 1654.500ZM77 1647V1662L85 1654.500Z" fill="#c2c2c2" />
      </Ic>
      <div className="relative -mt-px flex h-[40px] w-[112px] shrink-0 justify-center border-x border-b-2 border-x-[#9b9b9b] border-b-[#217346] bg-white text-[25px] font-bold leading-[38px] text-[#217346]">
        <T c="w-[86px]">Sheet1</T>
      </div>
      <Ic x={257} y={1634} w={100} h={43}>
        <circle cx="322" cy="1656" r="15.200" stroke="#777" strokeWidth="1.600" />
        <path d="M322 1648V1664M314 1656H330" stroke="#777" strokeWidth="4" />
      </Ic>
      <div className="ml-[1367px] mt-[11px] flex w-[4px] flex-col gap-[4px]">
        <i className="block h-[4px] bg-[#b5b5b5]" />
        <i className="block h-[4px] bg-[#b5b5b5]" />
        <i className="block h-[4px] bg-[#b5b5b5]" />
      </div>
      <div className="ml-[21px] mt-[4px] flex h-[33px] w-[1094px] bg-[#dadada]">
        <div className="flex w-[33px] items-center justify-center border-2 border-[#ababab] bg-white">
          <svg width="8" height="16" viewBox="0 0 8 16"><path d="M8 0V16L0 8Z" fill="#666" /></svg>
        </div>
        <div className="-ml-px w-[986px] border-2 border-[#ababab] bg-white" />
        <div className="ml-auto flex w-[33px] items-center justify-center border-2 border-[#ababab] bg-white">
          <svg width="8" height="16" viewBox="0 0 8 16"><path d="M0 0V16L8 8Z" fill="#666" /></svg>
        </div>
      </div>
    </div>
  );
}

function StatusBar() {
  return (
    <div className="flex grow items-center bg-[#f3f3f3]">
      <Ic x={2314} y={1679} w={482} h={40} c="ml-[2314px]">
        <rect x="2314" y="1679" width="76" height="40" fill="#c6c6c6" />
        <g stroke="#6a6a6a" strokeWidth="1.500">
          <path d="M2339.500 1685.500H2363.500V1709.500H2339.500ZM2339.500 1693.500H2363.500M2339.500 1701.500H2363.500M2347.500 1685.500V1709.500M2355.500 1685.500V1709.500" />
          <path d="M2415.500 1686.500H2440.500V1709.500H2415.500ZM2421.500 1689.500H2434.500V1706.500H2421.500ZM2424 1693.500H2432M2424 1696.500H2432M2424 1699.500H2432M2424 1702.500H2432" />
          <path d="M2491.500 1686.500H2516.500V1709.500H2491.500ZM2491.500 1700.500H2507.500V1686.500M2499.500 1686.500V1700.500" />
        </g>
        <path d="M2552 1698H2564" stroke="#666" strokeWidth="4" />
        <path d="M2573 1698H2771M2671.500 1693V1703" stroke="#ababab" strokeWidth="1.800" />
        <path d="M2778 1698H2794M2786 1690V1706" stroke="#666" strokeWidth="3" />
        <rect x="2647" y="1687" width="9" height="22" fill="#737373" />
      </Ic>
      <T c="ml-[18px] w-[40px] pt-[2px] text-[20px] leading-[30px] text-[#444]">80%</T>
    </div>
  );
}

export default function App() {
  return (
    <div className="flex h-[1719px] w-[2880px] flex-col overflow-hidden bg-[#e5e5e5] font-[Noto_Sans,sans-serif]">
      <header className="relative flex h-[128px] shrink-0 flex-col bg-[#217346]">
        <Backdrop />
        <TitleBar />
        <Tabs />
      </header>
      <Ribbon />
      <FormulaBar />
      <Sheet />
      <SheetTabs />
      <StatusBar />
    </div>
  );
}
